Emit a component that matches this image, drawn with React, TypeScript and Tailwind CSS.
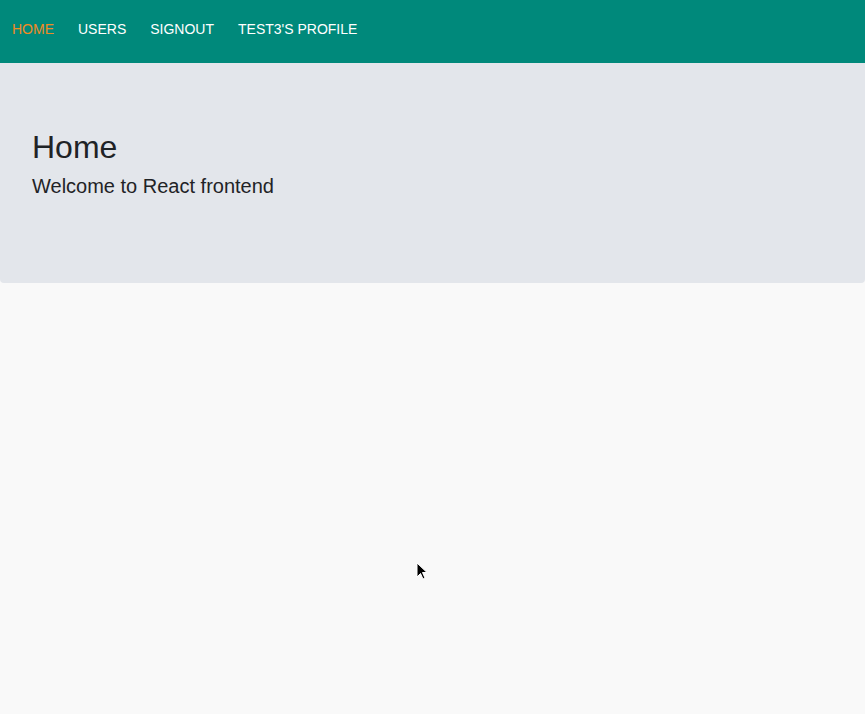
import React from "react";

export default function App() {
  const items = [
    { label: "HOME", active: true },
    { label: "USERS" },
    { label: "SIGNOUT" },
    { label: "TEST3'S PROFILE" },
  ];
  return (
    <div
      className="relative min-h-[714px] w-full bg-[#f9f9f9]"
      style={{ fontFamily: '"Liberation Sans", Arial, sans-serif' }}
    >
      <nav className="flex h-[63px] items-center gap-6 bg-[#00897b] px-3 pb-[6px]">
        {items.map((it) => (
          <a
            key={it.label}
            className={`text-[14px] leading-none ${it.active ? "text-[#f08a24]" : "text-white"}`}
          >
            {it.label}
          </a>
        ))}
      </nav>
      <div className="h-[220px] rounded-b-[4px] bg-[#e3e6eb] px-8 pt-[65px]">
        <h2 className="text-[32px] leading-[38px] text-[#1f2326]">Home</h2>
        <p className="mt-[8px] text-[20px] leading-[24px] text-[#1f2326]">Welcome to React frontend</p>
      </div>
      <svg
        className="absolute left-[416px] top-[562px]"
        width="14"
        height="20"
        viewBox="0 0 14 20"
      >
        <path d="M1 1 L1 15 L4.5 11.5 L7 17 L9 16 L6.5 10.5 L11 10.5 Z" fill="#000" stroke="#fff" strokeWidth="1" />
      </svg>
    </div>
  );
}
